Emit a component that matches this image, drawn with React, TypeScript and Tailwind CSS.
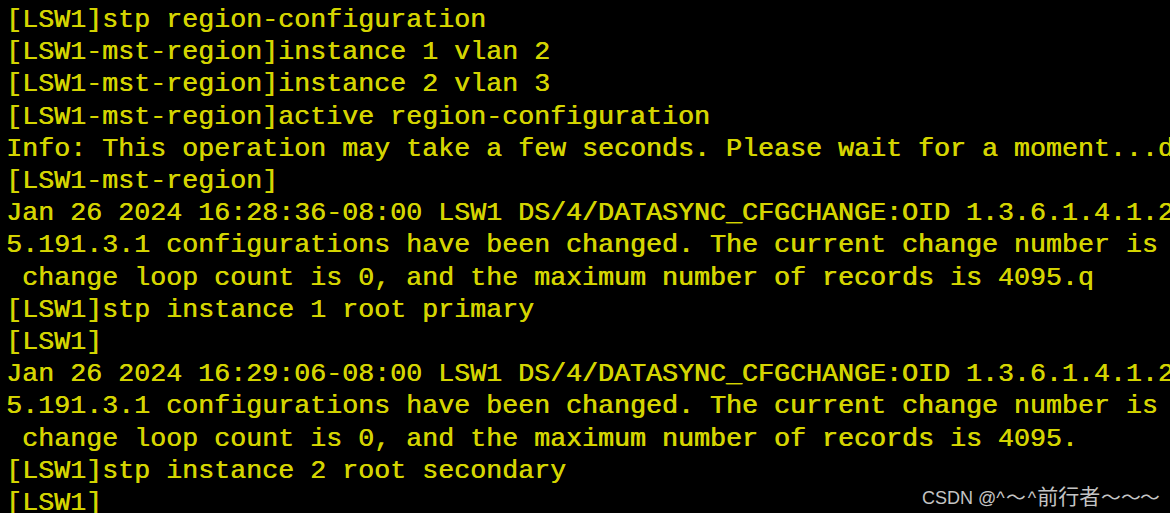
import React from "react";

const lines = [
  "[LSW1]stp region-configuration",
  "[LSW1-mst-region]instance 1 vlan 2",
  "[LSW1-mst-region]instance 2 vlan 3",
  "[LSW1-mst-region]active region-configuration",
  "Info: This operation may take a few seconds. Please wait for a moment...done.",
  "[LSW1-mst-region]",
  "Jan 26 2024 16:28:36-08:00 LSW1 DS/4/DATASYNC_CFGCHANGE:OID 1.3.6.1.4.1.2011.2",
  "5.191.3.1 configurations have been changed. The current change number is 2, the",
  " change loop count is 0, and the maximum number of records is 4095.q",
  "[LSW1]stp instance 1 root primary",
  "[LSW1]",
  "Jan 26 2024 16:29:06-08:00 LSW1 DS/4/DATASYNC_CFGCHANGE:OID 1.3.6.1.4.1.2011.2",
  "5.191.3.1 configurations have been changed. The current change number is 3, the",
  " change loop count is 0, and the maximum number of records is 4095.",
  "[LSW1]stp instance 2 root secondary",
  "[LSW1]",
];

function Tilde({ w }: { w: string }) {
  return (
    <span className={`inline-flex justify-center font-['Noto_Sans_CJK_SC',sans-serif] text-[18px] ${w}`}>
      <span className="inline-block scale-x-110">～</span>
    </span>
  );
}

export default function App() {
  return (
    <div className="relative w-[1170px] h-[513px] overflow-hidden bg-black">
      <div className="flex flex-col pl-[6px] pt-[4px] font-['Liberation_Mono','Courier_New',monospace] text-[26.67px] leading-[32.2px] font-normal text-[#d4d400] whitespace-pre [text-shadow:0.6px_0_0_#d4d400]">
        {lines.map((l, i) => (
          <div key={i}>{l}</div>
        ))}
      </div>
      <div className="absolute left-[922px] top-[482px] font-['Liberation_Sans','Noto_Sans_CJK_SC',sans-serif] text-[18px] leading-[27px] text-[#c4c4c4] whitespace-pre">
        <span>CSDN @^</span>
        <Tilde w="w-[23px]" />
        <span>^</span>
        <span className="ml-[1px] font-['Noto_Sans_CJK_SC',sans-serif] text-[21px]">前行者</span>
        <Tilde w="w-[21px]" />
        <Tilde w="w-[19px]" />
        <Tilde w="w-[19px]" />
      </div>
    </div>
  );
}
